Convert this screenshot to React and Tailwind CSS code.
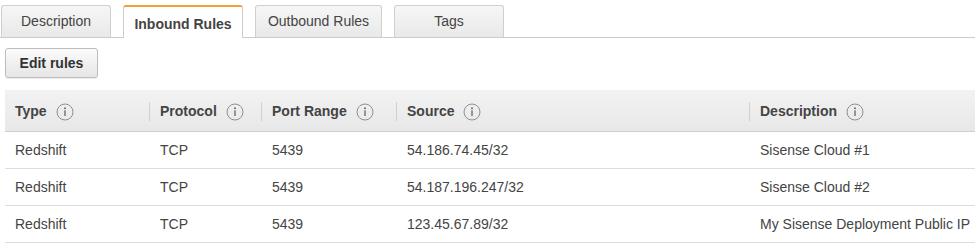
import React from "react";

function InfoIcon() {
  return (
    <svg width="18" height="18" viewBox="0 0 18 18" className="shrink-0">
      <circle cx="9" cy="9" r="8" fill="none" stroke="#8f8f8f" strokeWidth="1" />
      <circle cx="9" cy="5.3" r="1" fill="#6f6f6f" />
      <rect x="8.3" y="7.3" width="1.4" height="5.7" fill="#6f6f6f" />
    </svg>
  );
}

const cols = [
  { label: "Type", w: "w-[144px]" },
  { label: "Protocol", w: "w-[112px]" },
  { label: "Port Range", w: "w-[135px]" },
  { label: "Source", w: "w-[353px]" },
  { label: "Description", w: "w-[226px]" },
];

const rows = [
  ["Redshift", "TCP", "5439", "54.186.74.45/32", "Sisense Cloud #1"],
  ["Redshift", "TCP", "5439", "54.187.196.247/32", "Sisense Cloud #2"],
  ["Redshift", "TCP", "5439", "123.45.67.89/32", "My Sisense Deployment Public IP"],
];

export default function App() {
  return (
    <div
      className="w-[977px] h-[249px] bg-white text-[14px] text-[#444] overflow-hidden"
      style={{ fontFamily: '"Liberation Sans", Arial, sans-serif' }}
    >
      {/* Tabs */}
      <div className="pt-[5px]">
        <div className="flex items-end w-[975px] border-b border-[#cccccc] h-[33px]">
          <div className="ml-[1px] w-[110px] h-[32px] flex items-center justify-center border border-b-0 border-[#cfcfcf] rounded-t-[3px] bg-gradient-to-b from-[#f6f6f6] to-[#e9e9e9] text-[#444]">
            Description
          </div>
          <div className="ml-[12px] w-[120px] h-[33px] -mb-[1px] flex items-center justify-center pt-[3px] border border-b-0 border-[#cccccc] border-t-[2px] border-t-[#f2a03a] rounded-t-[3px] bg-white font-bold text-[#444]">
            Inbound Rules
          </div>
          <div className="ml-[12px] w-[127px] h-[32px] flex items-center justify-center border border-b-0 border-[#cfcfcf] rounded-t-[3px] bg-gradient-to-b from-[#f6f6f6] to-[#e9e9e9] text-[#444]">
            Outbound Rules
          </div>
          <div className="ml-[12px] w-[110px] h-[32px] flex items-center justify-center border border-b-0 border-[#cfcfcf] rounded-t-[3px] bg-gradient-to-b from-[#f6f6f6] to-[#e9e9e9] text-[#444]">
            Tags
          </div>
        </div>
      </div>

      {/* Edit button */}
      <div className="pl-[5px] pt-[10px]">
        <button className="w-[93px] h-[30px] rounded-[3px] border border-[#bdbdbd] bg-gradient-to-b from-[#fbfbfb] to-[#e6e6e6] font-bold text-[#333] text-[14px] shadow-[0_1px_1px_rgba(0,0,0,0.08)]">
          Edit rules
        </button>
      </div>

      {/* Table */}
      <div className="ml-[5px] mt-[12px] w-[970px]">
        <div className="flex h-[42px] pt-[2px] bg-gradient-to-b from-[#f2f2f2] to-[#e8e8e8] border-b border-[#cfcfcf]">
          {cols.map((c, i) => (
            <div key={c.label} className={`${c.w} flex items-center`}>
              {i > 0 && <div className="w-px h-[19px] bg-[#cfcfcf] shrink-0" />}
              <div className="flex items-center gap-[9px] font-bold text-[#444] pl-[10px]">
                <span>{c.label}</span>
                <InfoIcon />
              </div>
            </div>
          ))}
        </div>
        {rows.map((r, ri) => (
          <div key={ri} className="flex h-[37px] border-b border-[#dddddd] items-center">
            {r.map((cell, ci) => (
              <div key={ci} className={`${cols[ci].w} ${ci > 0 ? "pl-[11px]" : "pl-[10px]"} text-[#444] whitespace-nowrap`}>
                {cell}
              </div>
            ))}
          </div>
        ))}
      </div>
    </div>
  );
}
